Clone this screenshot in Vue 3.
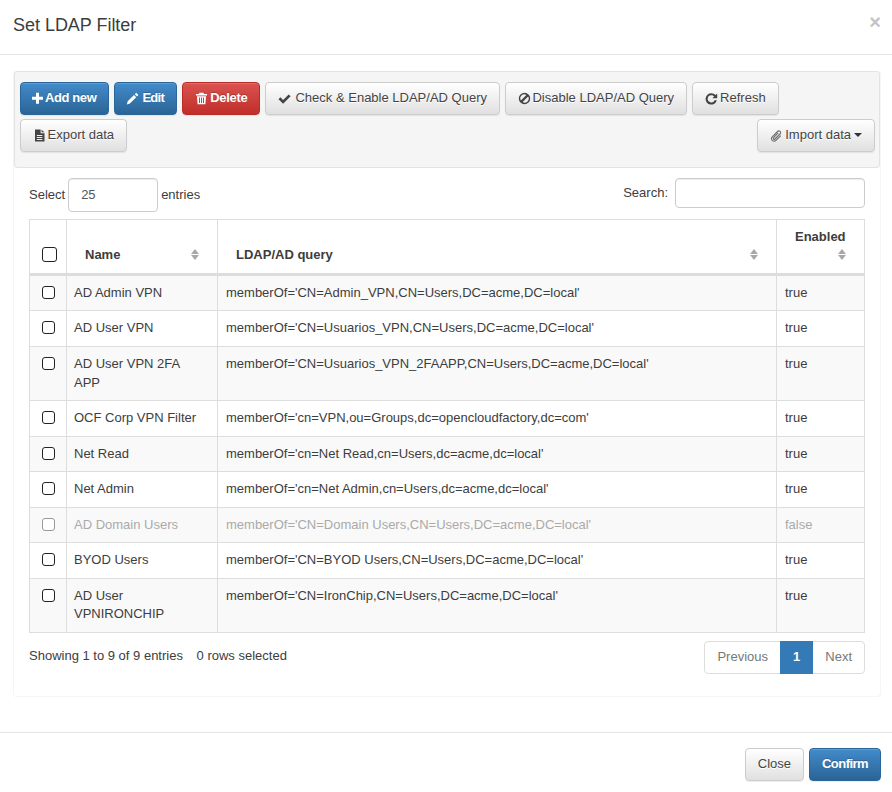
<template>
  <div class="modal">
    <div class="modal-header">
      <h4>Set LDAP Filter</h4>
      <span class="close-x">×</span>
    </div>

    <div class="modal-body">
      <div class="box">
        <!-- Toolbar -->
        <div class="toolbar">
          <button
            v-for="btn in buttons"
            :key="btn.label"
            type="button"
            class="btn"
            :class="[btn.kind, btn.extra]"
          >
            <svg class="icon" viewBox="0 0 13 13" :class="[btn.icon, { stroked: btn.stroke }]">
              <path :d="icons[btn.icon]" />
            </svg>
            <span>{{ btn.label }}</span>
            <span v-if="btn.caret" class="caret"></span>
          </button>
        </div>

        <div class="table-wrap">
          <div class="controls">
            <label class="length">
              Select
              <select class="form-control length-select">
                <option>25</option>
              </select>
              entries
            </label>
            <label class="search">
              Search:
              <input type="text" class="form-control search-input" />
            </label>
          </div>

          <table class="grid">
            <colgroup>
              <col class="c-check" />
              <col class="c-name" />
              <col class="c-query" />
              <col class="c-enabled" />
            </colgroup>
            <thead>
              <tr>
                <th class="check-head"><input type="checkbox" class="check check-all" /></th>
                <th>Name<span class="sort"></span></th>
                <th>LDAP/AD query<span class="sort"></span></th>
                <th>Enabled<span class="spacer"></span><span class="sort"></span></th>
              </tr>
            </thead>
            <tbody>
              <tr v-for="row in rows" :key="row.name" :class="{ disabled: !row.enabled }">
                <td class="check-cell"><input type="checkbox" class="check" /></td>
                <td class="name-cell">{{ row.name }}</td>
                <td>{{ row.query }}</td>
                <td>{{ row.enabled }}</td>
              </tr>
            </tbody>
          </table>

          <div class="table-foot">
            <div class="info">Showing 1 to 9 of 9 entries <span class="selected">0 rows selected</span></div>
            <ul class="pager">
              <li class="prev">Previous</li>
              <li class="active">1</li>
              <li class="next">Next</li>
            </ul>
          </div>
        </div>
      </div>
    </div>

    <div class="modal-footer">
      <button type="button" class="btn default">Close</button>
      <button type="button" class="btn primary bold tight">Confirm</button>
    </div>
  </div>
</template>

<script setup>
const icons = {
  plus: 'M4 .8h3v3.9h4v3H7v4H4v-4H0v-3h4z',
  pencil: 'M10.2 .8l2.2 2.2-1.4 1.4-2.2-2.2zM8 3l2.2 2.2-6.3 6.3-3.1 1 .9-3.2z',
  trash: 'M4.5 .8h4l.6 1.2h2.9v1.5H1V2h2.9zM2 4.3h9l-.6 8H2.6zM4 5.5v5.6h1V5.5zM6 5.5v5.6h1V5.5zM8 5.5v5.6h1V5.5z',
  ok: 'M.5 7.2l1.9-1.9 2.7 2.7L10.7 2.4l1.9 1.9-7.5 7.5z',
  ban: 'M6.5 .8a5.7 5.7 0 1 1 0 11.4a5.7 5.7 0 0 1 0-11.4zM2.9 8.4L8.4 2.9a4 4 0 0 0-5.5 5.5zM4.6 10.1a4 4 0 0 0 5.5-5.5z',
  refresh: 'M6.3 1.2c1.7 0 3.2.7 4.2 1.9L12.2 1.5v4.8H7.4l1.7-1.8c-.7-.7-1.7-1.2-2.8-1.2a3.6 3.6 0 1 0 3.3 5h2.2a5.7 5.7 0 1 1-5.5-7.1z',
  file: 'M2 .5h5.6v3.7h3.9v8.3H2zM8.6 .7l2.8 2.6H8.6zM3.8 6v1h5.6V6zM3.8 8v1h5.6V8zM3.8 10v1h5.6v-1z',
  clip: 'M10.8 6.6L6 11.4c-1.1 1.1-2.7 1-3.7 0s-1-2.6 0-3.6l5.2-5.3c.8-.8 1.9-.8 2.6-.1s.7 1.8-.1 2.6L5 10c-.4.4-1 .4-1.4 0s-.4-1 0-1.4l4.6-4.7'
}

const buttons = [
  { label: 'Add new', icon: 'plus', kind: 'primary', extra: 'bold add-new' },
  { label: 'Edit', icon: 'pencil', kind: 'primary', extra: 'bold tighter' },
  { label: 'Delete', icon: 'trash', kind: 'danger', extra: 'bold' },
  { label: 'Check & Enable LDAP/AD Query', icon: 'ok', kind: 'default' },
  { label: 'Disable LDAP/AD Query', icon: 'ban', kind: 'default' },
  { label: 'Refresh', icon: 'refresh', kind: 'default' },
  { label: 'Export data', icon: 'file', kind: 'default' },
  { label: 'Import data', icon: 'clip', kind: 'default', extra: 'push-right', stroke: true, caret: true }
]

const rows = [
  { name: 'AD Admin VPN', query: "memberOf='CN=Admin_VPN,CN=Users,DC=acme,DC=local'", enabled: true },
  { name: 'AD User VPN', query: "memberOf='CN=Usuarios_VPN,CN=Users,DC=acme,DC=local'", enabled: true },
  { name: 'AD User VPN 2FA APP', query: "memberOf='CN=Usuarios_VPN_2FAAPP,CN=Users,DC=acme,DC=local'", enabled: true },
  { name: 'OCF Corp VPN Filter', query: "memberOf='cn=VPN,ou=Groups,dc=opencloudfactory,dc=com'", enabled: true },
  { name: 'Net Read', query: "memberOf='cn=Net Read,cn=Users,dc=acme,dc=local'", enabled: true },
  { name: 'Net Admin', query: "memberOf='cn=Net Admin,cn=Users,dc=acme,dc=local'", enabled: true },
  { name: 'AD Domain Users', query: "memberOf='CN=Domain Users,CN=Users,DC=acme,DC=local'", enabled: false },
  { name: 'BYOD Users', query: "memberOf='CN=BYOD Users,CN=Users,DC=acme,DC=local'", enabled: true },
  { name: 'AD User VPNIRONCHIP', query: "memberOf='CN=IronChip,CN=Users,DC=acme,DC=local'", enabled: true }
]
</script>

<style scoped>
.modal {
  width: 892px;
  height: 792px;
  background: #fff;
  color: #3d3d3d;
  font-family: "Liberation Sans", Arial, sans-serif;
  font-size: 13px;
  line-height: 18.57px;
  overflow: hidden;
}

.modal-header {
  display: flex;
  justify-content: space-between;
  height: 55px;
  padding: 15px 11px 0 13px;
  box-sizing: border-box;
  border-bottom: 1px solid #e5e5e5;
}

.modal-header h4 {
  margin: 0;
  font-size: 18px;
  font-weight: 400;
  line-height: 20px;
  letter-spacing: -0.03px;
}

.close-x {
  font-size: 20px;
  font-weight: 700;
  line-height: 14px;
  color: #c4c4c4;
}

.modal-body {
  padding: 16px 11px 0 13px;
}

.box {
  height: 626px;
  box-sizing: border-box;
  border: 1px solid #f5f5f5;
  border-top: none;
  border-radius: 4px;
}

.toolbar {
  display: flex;
  flex-wrap: wrap;
  gap: 4.5px 5px;
  padding: 10px 4px 15px 5px;
  background: #f5f5f5;
  border: 1px solid #e3e3e3;
  border-radius: 3px;
}

.btn {
  display: inline-flex;
  align-items: center;
  padding: 6px 12px;
  height: 32.57px;
  box-sizing: border-box;
  font: inherit;
  line-height: 18.57px;
  border: 1px solid #ccc;
  border-radius: 4px;
  white-space: nowrap;
  cursor: pointer;
  box-shadow: inset 0 1px 0 rgba(255, 255, 255, 0.15), 0 1px 1px rgba(0, 0, 0, 0.075);
}

.btn.default {
  color: #444;
  background: linear-gradient(to bottom, #fff 0%, #e0e0e0 100%);
  border-color: #ccc;
  text-shadow: 0 1px 0 #fff;
}

.btn.primary {
  color: #fff;
  background: linear-gradient(to bottom, #428bca 0%, #2a6496 100%);
  border-color: #2b669a;
  text-shadow: 0 -1px 0 rgba(0, 0, 0, 0.2);
}

.btn.danger {
  color: #fff;
  background: linear-gradient(to bottom, #d9534f 0%, #c12e2a 100%);
  border-color: #b92c28;
  text-shadow: 0 -1px 0 rgba(0, 0, 0, 0.2);
}

.btn.bold {
  font-weight: 700;
  letter-spacing: -0.28px;
}

.btn.add-new {
  letter-spacing: -0.4px;
}

.btn.tight {
  letter-spacing: -0.55px;
}

.btn.tighter {
  letter-spacing: -0.7px;
}

.push-right {
  margin-left: auto;
}

.icon {
  flex: none;
  width: 13px;
  height: 13px;
  margin-right: 2px;
  fill: currentColor;
}

.icon.plus {
  margin-left: -1px;
  margin-right: 0;
}

.icon.pencil {
  margin-left: -1px;
  margin-right: 3px;
}

.icon.ok {
  margin-right: 4px;
}

.icon.ban,
.icon.file {
  margin-right: 1.5px;
}

.icon.stroked {
  fill: none;
  stroke: currentColor;
  stroke-width: 1.1;
  opacity: 0.75;
}

.caret {
  width: 0;
  height: 0;
  margin-left: 3px;
  border-top: 4px solid #333;
  border-left: 4px solid transparent;
  border-right: 4px solid transparent;
}

.table-wrap {
  padding: 10.4px 15px 0 15px;
}

.controls {
  display: flex;
  justify-content: space-between;
  align-items: flex-start;
  height: 40.7px;
}

.length {
  display: flex;
  align-items: center;
  gap: 3px;
  height: 34px;
  font-weight: 400;
}

.search {
  display: flex;
  align-items: center;
  gap: 7px;
  height: 30px;
}

.form-control {
  box-sizing: border-box;
  border: 1px solid #ccc;
  border-radius: 4px;
  background: #fff;
  color: #555;
  font: inherit;
  box-shadow: inset 0 1px 1px rgba(0, 0, 0, 0.075);
}

.length-select {
  width: 90px;
  height: 34px;
  padding: 6px 12px;
  appearance: none;
}

.search-input {
  width: 190px;
  height: 30px;
  padding: 5px 10px;
}

.grid {
  width: 835px;
  table-layout: fixed;
  border-collapse: collapse;
}

.c-check { width: 37px; }
.c-name { width: 151px; }
.c-query { width: 559px; }
.c-enabled { width: 88px; }

.grid th,
.grid td {
  border: 1px solid #ddd;
  padding: 8px;
  text-align: left;
  vertical-align: top;
}

.grid th {
  position: relative;
  padding-left: 18px;
  vertical-align: bottom;
  font-weight: 700;
  border-bottom: 3px solid #ddd;
}

.grid td.name-cell {
  padding-left: 7px;
  padding-right: 12px;
}

.spacer {
  display: block;
  height: 18.57px;
}

.sort {
  position: absolute;
  right: 17px;
  bottom: 13px;
  width: 9px;
  height: 11px;
}

.sort::before,
.sort::after {
  content: "";
  position: absolute;
  left: 0;
  border-left: 4.5px solid transparent;
  border-right: 4.5px solid transparent;
}

.sort::before {
  top: 0;
  border-bottom: 5px solid #a8a8a8;
}

.sort::after {
  bottom: 0;
  border-top: 5px solid #a8a8a8;
}

.grid th.check-head {
  padding-left: 12px;
  padding-bottom: 11px;
}

.check {
  display: block;
  appearance: none;
  box-sizing: border-box;
  width: 13px;
  height: 13px;
  margin: 2px 0 0;
  background: #fff;
  border: 1px solid #222;
  border-radius: 3px;
}

.check-all {
  width: 15px;
  height: 15px;
  margin: 0;
}

.grid td.check-cell {
  padding-left: 12px;
}

.grid tbody tr:nth-child(odd) {
  background: #f9f9f9;
}

.grid tbody tr.disabled td {
  color: #aaa;
}

.grid tbody tr.disabled .check {
  border-color: #999;
}

.table-foot {
  display: flex;
  justify-content: space-between;
  align-items: flex-start;
  margin-top: 8px;
}

.info {
  padding-top: 6px;
}

.selected {
  margin-left: 10px;
}

.pager {
  display: flex;
  margin: 0;
  padding: 0;
  list-style: none;
  height: 33px;
  border: 1px solid #ddd;
  border-radius: 4px;
  box-sizing: border-box;
  color: #777;
  background: #fff;
}

.pager li {
  padding: 7px 12px 6px;
  margin-top: -1px;
  margin-bottom: -1px;
}

.pager .active {
  padding-left: 13px;
  padding-right: 13px;
  background: #337ab7;
  color: #fff;
  font-weight: 700;
}

.modal-footer {
  display: flex;
  justify-content: flex-end;
  gap: 5px;
  margin-top: 35px;
  padding: 15px 11px 0 0;
  border-top: 1px solid #e5e5e5;
}
</style>
